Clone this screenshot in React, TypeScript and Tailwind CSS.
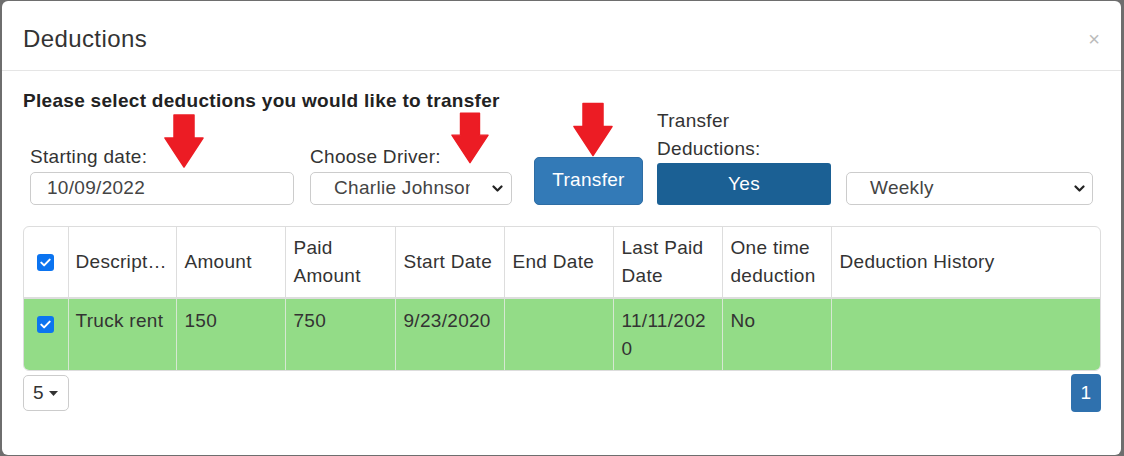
const font = { fontFamily: '"Liberation Sans", Arial, sans-serif' };

function Chevron() {
  return (
    <svg width="11" height="8" viewBox="0 0 11 8" className="shrink-0">
      <path d="M1.5 1.5l4 4 4-4" fill="none" stroke="#222" strokeWidth="2.2" strokeLinecap="round" strokeLinejoin="round" />
    </svg>
  );
}

function Check() {
  return (
    <span className="inline-flex h-[17px] w-[17px] items-center justify-center rounded-[3px] bg-[#0b74f0]">
      <svg width="11" height="9" viewBox="0 0 11 9">
        <path d="M1.3 4.6l2.8 2.8L9.7 1.6" fill="none" stroke="#fff" strokeWidth="2" strokeLinecap="round" strokeLinejoin="round" />
      </svg>
    </span>
  );
}

function Arrow({ className }: { className: string }) {
  // red annotation arrow pointing down
  return (
    <svg viewBox="0 0 40 54" className={"absolute " + className}>
      <path d="M10 1h20v23h9l-19 29L1 24h9z" fill="#ec1c24" stroke="#ec1c24" strokeWidth="1.5" strokeLinejoin="round" />
    </svg>
  );
}

const cols = [44, 108, 109, 110, 109, 109, 109, 109, 270];

export default function App() {
  return (
    <div className="relative h-[456px] w-[1124px] overflow-hidden bg-[#6e6e6e] pb-[1px] pl-[2px] pr-[3px] pt-[1px]" style={font}>
      <div className="flex h-full flex-col rounded-[6px] bg-white text-[#333]">
        {/* header */}
        <div className="flex h-[70px] items-center justify-between border-b border-[#e5e5e5] pl-[21px] pr-[21px] pt-[6px]">
          <h4 className="text-[24px] leading-[28px] tracking-[0.4px] text-[#333]">Deductions</h4>
          <span className="text-[20px] leading-none text-[#bbb]">×</span>
        </div>

        {/* body */}
        <div className="flex flex-col pl-[21px] pr-[20px] pt-[16px] tracking-[0.3px]">
          <p className="text-[19px] font-bold leading-[28px] text-[#222]">Please select deductions you would like to transfer</p>

          <div className="mt-[-8px] flex items-end pl-[7px] text-[19px]">
            <div className="flex w-[264px] flex-col">
              <label className="leading-[28px]">Starting date:</label>
              <div className="mt-[1px] flex h-[33px] items-center rounded-[5px] border border-[#ccc] pl-[16px] text-[#444]">10/09/2022</div>
            </div>
            <div className="ml-[16px] flex w-[202px] flex-col">
              <label className="leading-[28px]">Choose Driver:</label>
              <div className="mt-[1px] flex h-[33px] items-center rounded-[5px] border border-[#ccc] pl-[23px] pr-[8px] text-[#444]">
                <span className="w-[136px] overflow-hidden whitespace-nowrap">Charlie Johnson</span>
                <span className="ml-auto"><Chevron /></span>
              </div>
            </div>
            <button className="ml-[22px] flex h-[48px] w-[109px] items-center justify-center rounded-[5px] border border-[#2e6da4] bg-[#337ab7] pb-[2px] text-white">Transfer</button>
            <div className="ml-[14px] flex w-[174px] flex-col">
              <label className="w-[120px] leading-[28px]">Transfer Deductions:</label>
              <button className="flex h-[42px] items-center justify-center rounded-[3px] bg-[#1b6094] pt-[1px] text-white">Yes</button>
            </div>
            <div className="ml-[15px] flex h-[33px] w-[247px] items-center rounded-[5px] border border-[#ccc] pl-[23px] pr-[7px] text-[#444]">
              <span>Weekly</span>
              <span className="ml-auto"><Chevron /></span>
            </div>
          </div>

          {/* table */}
          <div className="mt-[21px] overflow-hidden rounded-[6px] border border-[#ddd] text-[19px]">
            <table className="w-full table-fixed border-collapse">
              <colgroup>
                {cols.map((w, i) => (
                  <col key={i} style={{ width: w }} />
                ))}
              </colgroup>
              <thead>
                <tr className="h-[71px] border-b-2 border-[#ddd] text-left align-middle">
                  <th className="px-[8px] text-center font-normal"><span className="inline-flex align-middle"><Check /></span></th>
                  <th className="truncate border-l border-[#ddd] px-[7px] font-normal leading-[28px]">Description</th>
                  <th className="border-l border-[#ddd] px-[8px] font-normal leading-[28px]">Amount</th>
                  <th className="border-l border-[#ddd] px-[8px] font-normal leading-[28px]">Paid<br />Amount</th>
                  <th className="border-l border-[#ddd] px-[8px] font-normal leading-[28px]">Start Date</th>
                  <th className="border-l border-[#ddd] px-[8px] font-normal leading-[28px]">End Date</th>
                  <th className="border-l border-[#ddd] px-[8px] font-normal leading-[28px]">Last Paid<br />Date</th>
                  <th className="border-l border-[#ddd] px-[8px] font-normal leading-[28px]">One time<br />deduction</th>
                  <th className="border-l border-[#ddd] px-[8px] font-normal leading-[28px]">Deduction History</th>
                </tr>
              </thead>
              <tbody>
                <tr className="h-[72px] bg-[#93dc87] align-top leading-[28px]">
                  <td className="px-[8px] pt-[10px] text-center"><Check /></td>
                  <td className="border-l border-[#d6e8d2] px-[7px] pt-[8px]">Truck rent</td>
                  <td className="border-l border-[#d6e8d2] px-[8px] pt-[8px]">150</td>
                  <td className="border-l border-[#d6e8d2] px-[8px] pt-[8px]">750</td>
                  <td className="border-l border-[#d6e8d2] px-[8px] pt-[8px]">9/23/2020</td>
                  <td className="border-l border-[#d6e8d2] px-[8px] pt-[8px]"></td>
                  <td className="break-all border-l border-[#d6e8d2] px-[8px] pt-[8px]">11/11/2020</td>
                  <td className="border-l border-[#d6e8d2] px-[8px] pt-[8px]">No</td>
                  <td className="border-l border-[#d6e8d2] px-[8px] pt-[8px]"></td>
                </tr>
              </tbody>
            </table>
          </div>

          {/* pagination */}
          <div className="mt-[3px] flex items-start justify-between text-[19px]">
            <button className="mt-[1px] flex h-[36px] w-[46px] items-center gap-[5px] rounded-[5px] border border-[#ccc] pl-[9px] text-[#333]">
              5
              <svg width="9" height="5" viewBox="0 0 9 5"><path d="M0 0h9L4.5 5z" fill="#333" /></svg>
            </button>
            <button className="flex h-[38px] w-[30px] items-center justify-center rounded-[4px] bg-[#2f71ae] text-white">1</button>
          </div>
        </div>
      </div>

      <Arrow className="left-[164px] top-[114px] h-[54px] w-[40px]" />
      <Arrow className="left-[451px] top-[110px] h-[56px] w-[38px]" />
      <Arrow className="left-[573px] top-[101px] h-[57px] w-[40px]" />
    </div>
  );
}
